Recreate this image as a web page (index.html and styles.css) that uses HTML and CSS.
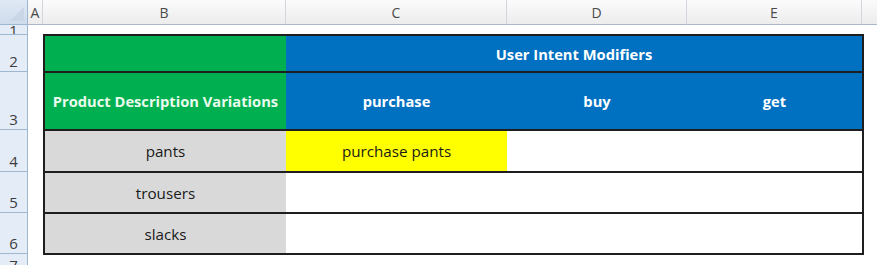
FILE: index.html
```html
<!DOCTYPE html>
<html>
<head>
<meta charset="utf-8">
<link rel="stylesheet" href="styles.css">
</head>
<body>
<div class="sheet">
  <div class="corner"><svg class="tri" width="14" height="14" viewBox="0 0 14 14"><polygon points="14,0 14,14 0,14" fill="#c9d6e6"/></svg></div>
  <div class="colh">A</div>
  <div class="colh">B</div>
  <div class="colh">C</div>
  <div class="colh">D</div>
  <div class="colh">E</div>
  <div class="colh last"></div>

  <div class="rowh r1">1</div>
  <div class="rowh">2</div>
  <div class="rowh">3</div>
  <div class="rowh">4</div>
  <div class="rowh">5</div>
  <div class="rowh">6</div>
  <div class="rowh r7">7</div>

  <div class="table">
    <div class="trow h2">
      <div class="cell green"></div>
      <div class="cell blue span3">User Intent Modifiers</div>
    </div>
    <div class="trow h3">
      <div class="cell green">Product Description Variations</div>
      <div class="cell blue">purchase</div>
      <div class="cell blue">buy</div>
      <div class="cell blue">get</div>
    </div>
    <div class="trow h4">
      <div class="cell gray">pants</div>
      <div class="cell yellow">purchase pants</div>
      <div class="cell"></div>
      <div class="cell"></div>
    </div>
    <div class="trow h5">
      <div class="cell gray">trousers</div>
      <div class="cell"></div>
      <div class="cell"></div>
      <div class="cell"></div>
    </div>
    <div class="trow h6">
      <div class="cell gray">slacks</div>
      <div class="cell"></div>
      <div class="cell"></div>
      <div class="cell"></div>
    </div>
  </div>
</div>
</body>
</html>
```

FILE: styles.css
```css
html, body {
  margin: 0;
  padding: 0;
  background: #ffffff;
}
body {
  font-family: "Open Sans", "Liberation Sans", sans-serif;
  width: 877px;
  height: 265px;
  overflow: hidden;
}
.sheet {
  display: grid;
  grid-template-columns: 28px 15px 243px 221px 180px 175px 1fr;
  grid-template-rows: 25px 10px 37px 58px 42px 41px 41px 11px;
  width: 877px;
  height: 265px;
  background: #ffffff;
}
.corner {
  grid-column: 1;
  grid-row: 1;
  background: linear-gradient(#dfe8f4, #cfdcec);
  border-right: 1px solid #9eb6ce;
  border-bottom: 1px solid #9eb6ce;
  box-sizing: border-box;
  display: flex;
  align-items: flex-end;
  justify-content: flex-end;
  padding: 0 3px 3px 0;
}
.tri { display: block; }
.colh {
  grid-row: 1;
  background: linear-gradient(#fbfbfb, #ececec);
  border-right: 1px solid #d2d6dc;
  border-bottom: 1px solid #a9b7c8;
  box-sizing: border-box;
  display: flex;
  align-items: center;
  justify-content: center;
  font-size: 14px;
  color: #4a4a4a;
  padding-top: 1px;
}
.colh.last { border-right: none; }
.rowh {
  grid-column: 1;
  background: #e4ecf7;
  border-right: 1px solid #9eb6ce;
  border-bottom: 1px solid #9eb6ce;
  box-sizing: border-box;
  display: flex;
  align-items: flex-end;
  justify-content: center;
  font-size: 15px;
  color: #3d3d3d;
  line-height: 18px;
  padding-bottom: 1px;
  overflow: hidden;
}
.rowh.r1 {
  padding-bottom: 0;
  line-height: 8px;
}
.rowh.r7 {
  align-items: flex-start;
  line-height: 22px;
  border-bottom: none;
}
.table {
  grid-column: 3 / 7;
  grid-row: 3 / 8;
  margin: -1px -2px -1px 0;
  border: 2px solid #1e1e1e;
  display: flex;
  flex-direction: column;
  background: #ffffff;
}
.trow {
  display: grid;
  grid-template-columns: 241px 221px 180px 175px;
  border-bottom: 2px solid #1e1e1e;
  box-sizing: border-box;
}
.trow.h2 { height: 37px; }
.trow.h3 { height: 58px; }
.trow.h4 { height: 42px; }
.trow.h5 { height: 41px; }
.trow.h6 { height: 39px; border-bottom: none; }
.cell {
  display: flex;
  align-items: center;
  justify-content: center;
  font-size: 15.2px;
  color: #1a1a1a;
  white-space: nowrap;
}
.span3 { grid-column: 2 / 5; }
.green {
  background: #00b050;
  color: #eafbee;
  font-weight: bold;
  font-size: 14.7px;
}
.blue {
  background: #0070c0;
  color: #ffffff;
  font-weight: bold;
  font-size: 14.7px;
}
.gray { background: #d9d9d9; }
.yellow { background: #ffff00; }
```
